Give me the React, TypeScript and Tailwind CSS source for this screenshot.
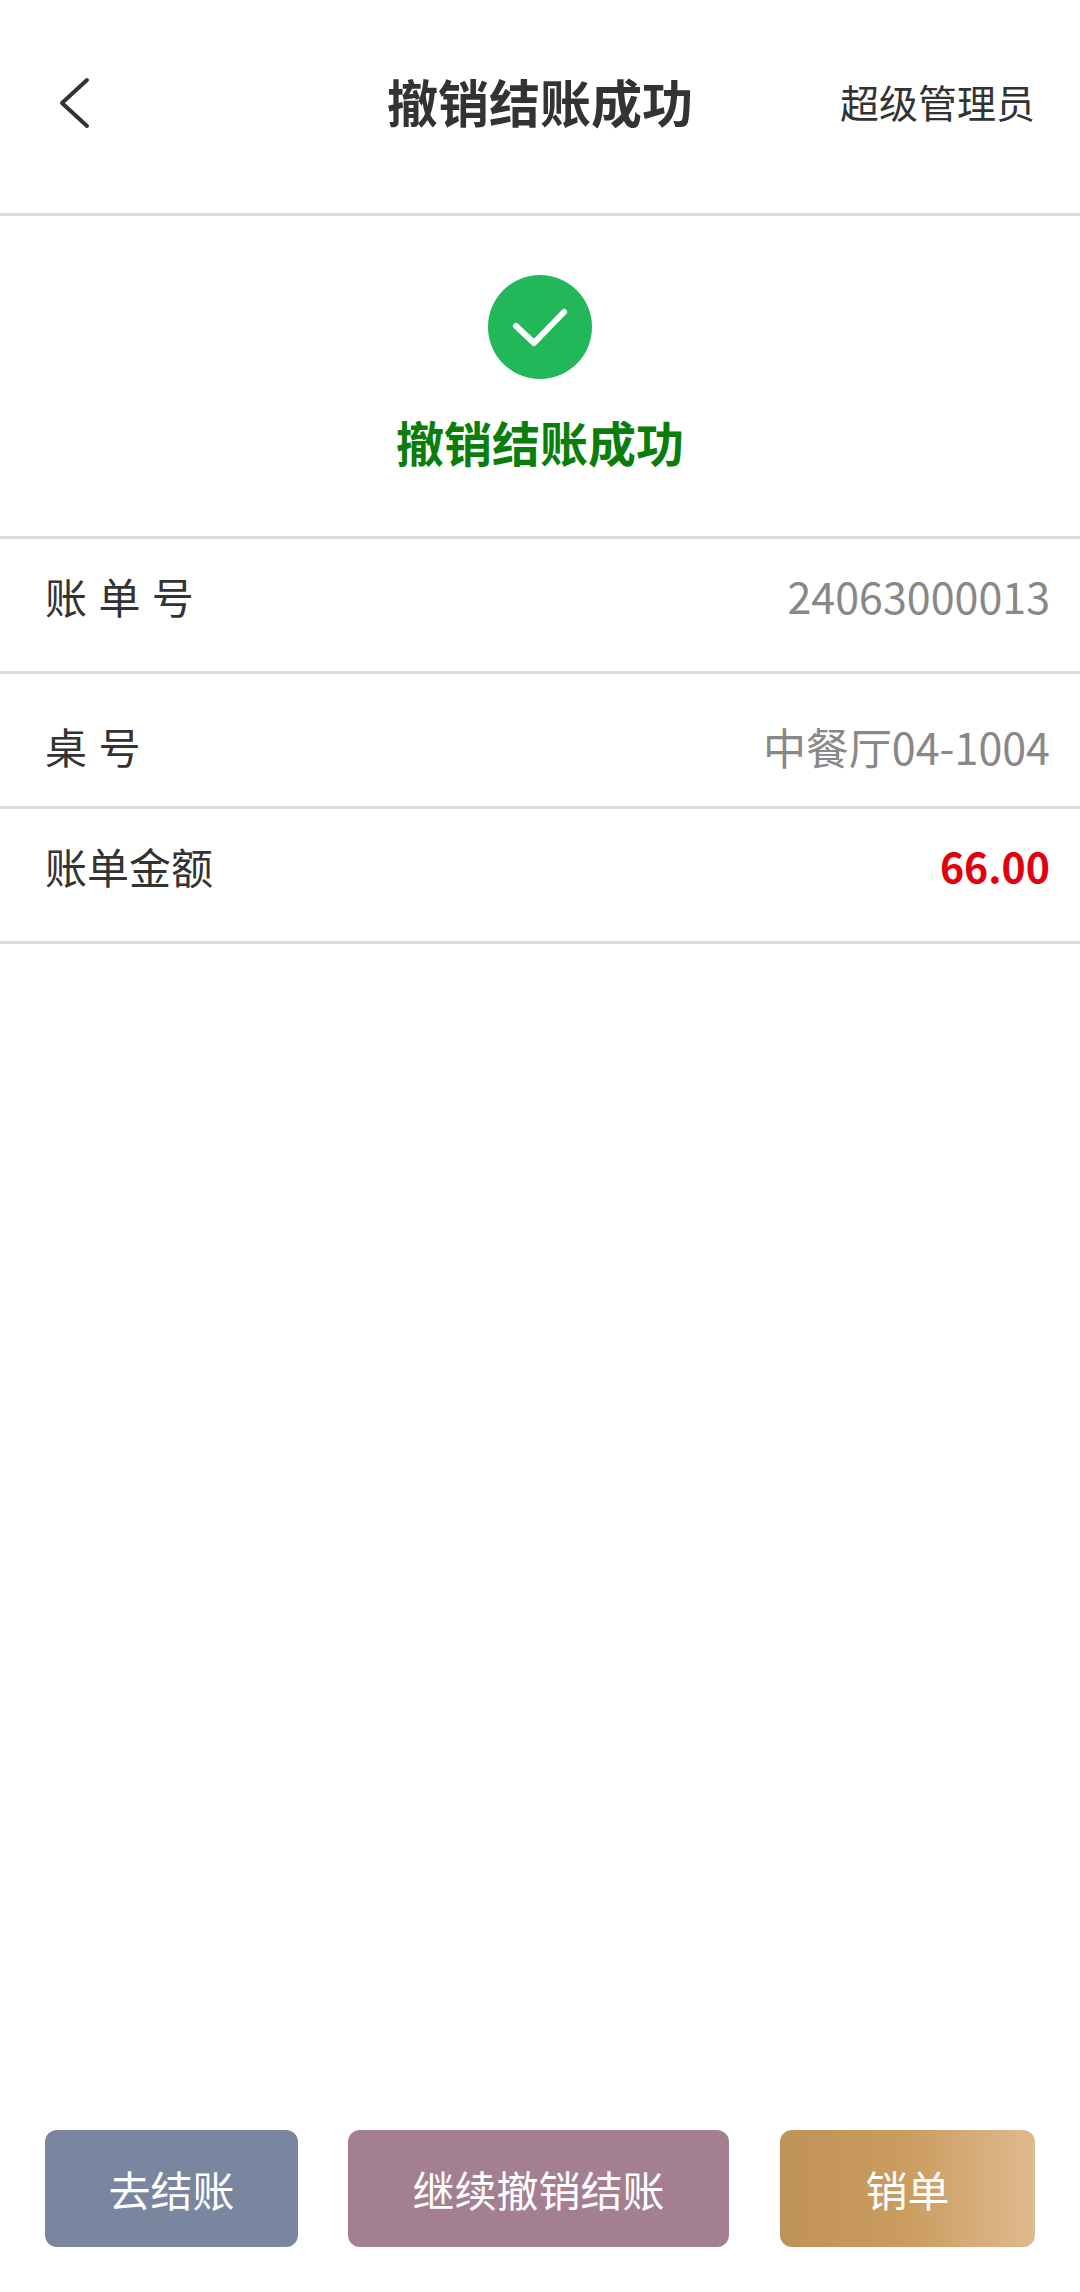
const rows = [
  { label: '账 单 号', value: '24063000013', y: 'pb-[19px]' },
  { label: '桌 号', value: '中餐厅04-1004', y: 'pt-[12px]' },
];

export default function App() {
  return (
    <div className="flex h-[2292px] w-[1080px] flex-col overflow-hidden bg-white font-['Noto_Sans_CJK_SC',sans-serif] text-[#333333]">
      {/* header */}
      <div className="grid h-[216px] shrink-0 grid-cols-[1fr_auto_1fr] items-center border-b-[3px] border-[#dddddd] px-[45px] pb-[10px]">
        <svg width="32" height="52" viewBox="0 0 32 52" fill="none" className="ml-[13px] mt-[2px]">
          <path d="M29 3 L4 26 L29 49" stroke="#333333" strokeWidth="4" strokeLinecap="round" strokeLinejoin="round" />
        </svg>
        <h1 className="text-[51px] font-bold leading-none">撤销结账成功</h1>
        <span className="justify-self-end text-[39px] leading-none">超级管理员</span>
      </div>

      {/* result */}
      <div className="flex h-[323px] shrink-0 flex-col items-center border-b-[3px] border-[#dddddd] pt-[59px]">
        <div className="flex h-[104px] w-[104px] items-center justify-center rounded-full bg-[#22b85a]">
          <svg width="62" height="44" viewBox="0 0 62 44" fill="none">
            <path d="M7 21 L25 38 L55 7" stroke="white" strokeWidth="6" strokeLinecap="round" strokeLinejoin="round" />
          </svg>
        </div>
        <div className="mt-[38px] text-[48px] font-bold leading-none text-[#0a7d0a]">撤销结账成功</div>
      </div>

      {/* bill info */}
      {rows.map((row) => (
        <div
          key={row.label}
          className={`flex h-[135px] shrink-0 items-center justify-between border-b-[3px] border-[#dddddd] pl-[45px] pr-[30px] ${row.y}`}
        >
          <span className="text-[42px] leading-none [word-spacing:2px]">{row.label}</span>
          <span className="text-[43px] leading-none text-[#888888]">{row.value}</span>
        </div>
      ))}
      <div className="flex h-[135px] shrink-0 items-center justify-between border-b-[3px] border-[#dddddd] pb-[19px] pl-[45px] pr-[30px]">
        <span className="text-[42px] leading-none">账单金额</span>
        <span className="text-[41px] font-bold leading-none text-[#e2000f]">66.00</span>
      </div>

      {/* actions */}
      <div className="mt-auto flex items-center gap-[50px] pb-[45px] pl-[45px] pr-[45px]">
        <button className="flex h-[117px] w-[253px] items-center justify-center rounded-[12px] bg-[#7a869f] text-[42px] text-white">
          去结账
        </button>
        <button className="flex h-[117px] w-[381px] items-center justify-center rounded-[12px] bg-[#a37f91] text-[42px] text-white">
          继续撤销结账
        </button>
        <button className="ml-px flex h-[117px] w-[255px] items-center justify-center rounded-[12px] bg-gradient-to-r from-[#bf9257] via-[#cb9c60] to-[#dfba8e] text-[42px] text-white">
          销单
        </button>
      </div>
    </div>
  );
}
